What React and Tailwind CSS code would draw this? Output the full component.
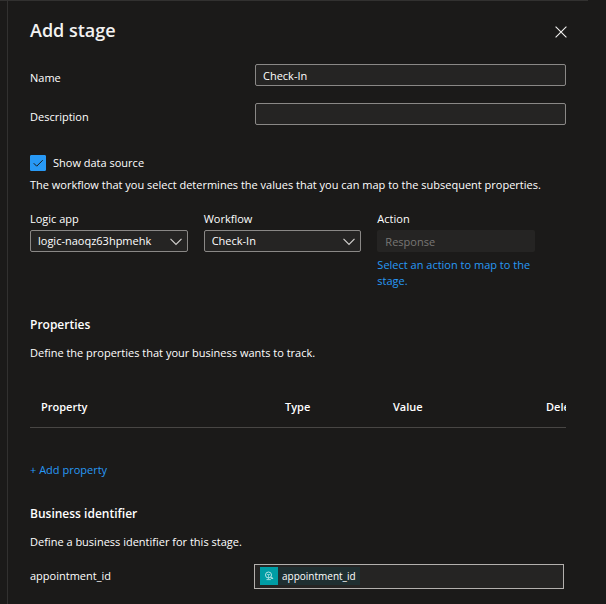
import { useState } from "react";

const fieldClass =
  "h-[22px] min-w-0 rounded-[2px] border border-[#8a8886] bg-[#252423] px-[7px] text-[11px] text-white outline-none";

function TextRow({ id, label, defaultValue }) {
  return (
    <div className="flex items-start">
      <label htmlFor={id} className="mt-[6px] w-[225px] shrink-0 leading-4">
        {label}
      </label>
      <input id={id} type="text" defaultValue={defaultValue} className={`${fieldClass} flex-1`} />
    </div>
  );
}

function Dropdown({ id, label, value }) {
  return (
    <div className="min-w-0 flex-1">
      <label htmlFor={id} className="block leading-4">
        {label}
      </label>
      <div className="relative mt-[3px] flex">
        <select id={id} defaultValue={value} className={`${fieldClass} w-full appearance-none pr-6`}>
          <option>{value}</option>
        </select>
        <svg
          className="pointer-events-none absolute top-2 right-[6px] h-2 w-3"
          viewBox="0 0 12 8"
          fill="none"
          stroke="#d2d0ce"
          strokeWidth="1.2"
        >
          <path d="M0.5 0.8 6 6.3 11.5 0.8" />
        </svg>
      </div>
    </div>
  );
}

function Checkbox({ label }) {
  const [checked, setChecked] = useState(true);
  return (
    <label className="flex h-4 items-center gap-[7px]">
      <span className="relative flex h-4 w-4 shrink-0">
        <input
          type="checkbox"
          checked={checked}
          onChange={(e) => setChecked(e.target.checked)}
          className="h-4 w-4 appearance-none rounded-[1px] border border-[#2899f5] bg-[#1b1a19] checked:bg-[#2899f5]"
        />
        {checked && (
          <svg
            className="pointer-events-none absolute inset-0 h-4 w-4"
            viewBox="0 0 16 16"
            fill="none"
            stroke="#1b1a19"
            strokeWidth="1"
          >
            <path d="M3.7 8.2 6.7 11.2 12.7 5.2" />
          </svg>
        )}
      </span>
      <span className="leading-4">{label}</span>
    </label>
  );
}

export default function App() {
  return (
    <div className="min-h-screen overflow-hidden bg-[#1b1a19] pl-[7px] font-['Open_Sans','Noto_Sans',sans-serif] text-[11px] text-white">
      <div className="-ml-[7px] mr-[18px] h-px bg-[#323130]" />
      <section className="min-h-[calc(100vh-1px)] border-l border-[#323130] pr-10 pb-[14px] pl-[22px]">
        <header className="flex h-[63px] items-start justify-between pt-[15px]">
          <h1 className="text-lg leading-7 font-semibold text-[#f3f2f1]">Add stage</h1>
          <button type="button" aria-label="Close" className="mt-2 -mr-px flex h-4 w-3 items-center justify-center">
            <svg className="h-3 w-3" viewBox="0 0 12 12" stroke="#f3f2f1" strokeWidth="1.1">
              <path d="M0.6 0.6 11.4 11.4M11.4 0.6 0.6 11.4" />
            </svg>
          </button>
        </header>

        <div className="flex flex-col gap-[17px]">
          <TextRow id="name" label="Name" defaultValue="Check-In" />
          <TextRow id="description" label="Description" defaultValue="" />
        </div>

        <div className="mt-[30px]">
          <Checkbox label="Show data source" />
        </div>
        <p className="mt-[6px] leading-4">
          The workflow that you select determines the values that you can map to the subsequent properties.
        </p>

        <div className="mt-[18px] mr-[31px] flex gap-4">
          <Dropdown id="logic-app" label="Logic app" value="logic-naoqz63hpmehk" />
          <Dropdown id="workflow" label="Workflow" value="Check-In" />
          <div className="min-w-0 flex-1">
            <label htmlFor="action" className="block leading-4">
              Action
            </label>
            <input
              id="action"
              type="text"
              disabled
              value="Response"
              className="mt-[3px] block h-[22px] w-full rounded-[2px] bg-[#252423] px-2 text-[11px] text-[#797775]"
            />
            <a href="#action" className="mt-[5px] block leading-4 text-[#2899f5]">
              Select an action to map to the stage.
            </a>
          </div>
        </div>

        <h2 className="mt-7 text-xs leading-4 font-semibold">Properties</h2>
        <p className="mt-3 leading-4">Define the properties that your business wants to track.</p>

        <div className="mt-[26px] overflow-hidden">
          <table className="w-[585px] table-fixed border-collapse text-left">
            <thead>
              <tr className="h-10 border-b border-[#484644]">
                <th className="w-[244px] px-[11px] font-semibold">Property</th>
                <th className="w-[108px] px-[11px] font-semibold">Type</th>
                <th className="w-[153px] px-[11px] font-semibold">Value</th>
                <th className="px-[11px] font-semibold">Delete</th>
              </tr>
            </thead>
          </table>
        </div>

        <button type="button" className="mt-[34px] block leading-4 text-[#2899f5]">
          + Add property
        </button>

        <h2 className="mt-7 text-xs leading-4 font-semibold">Business identifier</h2>
        <p className="mt-3 leading-4">Define a business identifier for this stage.</p>

        <div className="mt-[14px] mr-[2px] flex items-center">
          <label htmlFor="identifier" className="w-56 shrink-0 leading-4">
            appointment_id
          </label>
          <div className="flex h-[25px] min-w-0 flex-1 items-center border border-[#b3b0ad] bg-[#252423] pl-[5px]">
            <span className="flex h-[18px] items-center bg-[#1f2f31] pr-1 text-[10px] leading-4">
              <span className="mr-1 flex h-[18px] w-[18px] items-center justify-center bg-[#009da5]">
                <svg className="h-[10px] w-[10px]" viewBox="0 0 10 10" fill="none" stroke="#b5e4e6">
                  <circle cx="4.5" cy="4" r="3" strokeWidth="1" />
                  <path d="M3 3.5h3M4.5 4v4" strokeWidth="0.7" />
                  <path d="M2.5 8.6h4.3M6.5 6l2.6 1.4H6.8" strokeWidth="0.9" />
                </svg>
              </span>
              appointment_id
            </span>
            <input id="identifier" type="text" className="min-w-0 flex-1 bg-transparent outline-none" />
          </div>
        </div>
      </section>
    </div>
  );
}
